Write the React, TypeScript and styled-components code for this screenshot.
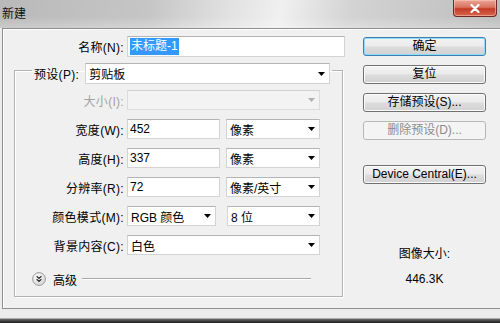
import styled, { createGlobalStyle } from "styled-components";

const GlobalStyle = createGlobalStyle`
  html, body {
    margin: 0;
    padding: 0;
  }
  body {
    width: 500px;
    height: 323px;
    overflow: hidden;
    background: #ececec;
    font-family: "Liberation Sans", "Noto Sans CJK SC", sans-serif;
    font-size: 12px;
    color: #000;
  }
`;

const Window = styled.div`
  width: 500px;
  height: 323px;
  display: flex;
  flex-direction: column;
  background: #ececec;
`;

const TitleBar = styled.div`
  height: 28px;
  flex: none;
  display: flex;
  align-items: flex-start;
  justify-content: space-between;
  background:
    linear-gradient(to bottom, rgba(255, 255, 255, 0) 60%, rgba(255, 255, 255, 0.25) 100%),
    linear-gradient(100deg, #b9b9b9 0%, #c6c6c6 30%, #e2e2e2 46%, #f0f0f0 56%, #d3d3d3 70%, #bdbdbd 100%);
`;

const Title = styled.span`
  padding: 5px 0 0 2px;
  font-family: "Noto Sans CJK SC", sans-serif;
  font-size: 12px;
  line-height: 16px;
  color: #111;
`;

const CloseButton = styled.div`
  width: 44px;
  height: 17px;
  margin-right: 3px;
  box-sizing: border-box;
  border: 1px solid #6e2a22;
  border-top: none;
  border-radius: 0 0 4px 4px;
  background: linear-gradient(to bottom, #e9a597 0%, #d9735f 45%, #c23b25 55%, #d8664d 100%);
  box-shadow: inset 0 0 0 1px rgba(255, 210, 200, 0.5);
  display: flex;
  align-items: center;
  justify-content: center;
`;

const Frame = styled.div`
  height: 281px;
  flex: none;
  margin-left: 2px;
  box-sizing: border-box;
  border: 1px solid #8f8f8f;
  border-right: none;
  box-shadow: inset 1px 1px 0 #fff;
  background: #f0f0f0;
  padding: 7px 0 0 11px;
  display: flex;
`;

const BottomEdge = styled.div`
  flex: 1;
  background: linear-gradient(to bottom, #ececec 0, #ececec 9px, #6a6a6a 10px, #1c1c1c 100%);
`;

const LeftCol = styled.div`
  width: 331px;
  display: flex;
  flex-direction: column;
`;

const RightCol = styled.div`
  width: 123px;
  margin-left: 18px;
  padding-top: 1px;
  display: flex;
  flex-direction: column;
`;

const NameRow = styled.div`
  display: grid;
  grid-template-columns: 110px 218px;
  column-gap: 3px;
  align-items: center;
  height: 21px;
`;

const Label = styled.span<{ $disabled?: boolean }>`
  text-align: right;
  white-space: nowrap;
  letter-spacing: 0.3px;
  color: ${(p) => (p.$disabled ? "#a3a3a3" : "#000")};
`;

const TextBox = styled.div<{ $w?: number }>`
  height: ${(p) => (p.$w ? 20 : 21)}px;
  width: ${(p) => (p.$w ? `${p.$w}px` : "auto")};
  box-sizing: border-box;
  border: 1px solid #d3d3d3;
  border-top-color: #b4b4b4;
  background: #fff;
  padding: 0 2px;
  display: flex;
  align-items: center;
  flex: none;
`;

const Selected = styled.span`
  background: #3399ff;
  color: #fff;
  padding: 0 1px;
  line-height: 17px;
`;

const Field = styled.div<{ $w: number; $h?: number; $disabled?: boolean }>`
  width: ${(p) => p.$w}px;
  height: ${(p) => p.$h ?? 20}px;
  flex: none;
  box-sizing: border-box;
  border: 1px solid ${(p) => (p.$disabled ? "#dcdcdc" : "#d3d3d3")};
  border-top-color: ${(p) => (p.$disabled ? "#d0d0d0" : "#b4b4b4")};
  background: ${(p) => (p.$disabled ? "#f3f3f3" : "#fff")};
  padding: 0 4px 0 3px;
  display: flex;
  align-items: center;
  justify-content: space-between;
  white-space: nowrap;
`;

const GroupBox = styled.fieldset`
  width: 329px;
  box-sizing: border-box;
  margin: 0;
  padding: 6px 0 12px 0;
  border: 1px solid #b3b3b3;
  box-shadow: 1px 1px 0 #fff, inset 1px 1px 0 #fff;
`;

const Legend = styled.legend`
  margin-left: 17px;
  padding: 6px 2px 0 2px;
`;

const LegendInner = styled.div`
  display: flex;
  align-items: center;
  gap: 6px;
`;

const FieldGrid = styled.div`
  display: grid;
  grid-template-columns: 109px auto;
  grid-auto-rows: 20px;
  column-gap: 3px;
  row-gap: 9px;
  align-items: center;
`;

const Controls = styled.div<{ $gap?: number }>`
  display: flex;
  gap: ${(p) => p.$gap ?? 6}px;
`;

const AdvancedRow = styled.div`
  grid-column: 1 / -1;
  height: 16px;
  margin-top: 10px;
  margin-left: 17px;
  display: flex;
  align-items: center;
`;

const AdvancedText = styled.span`
  margin-left: 7px;
`;

const Rule = styled.div`
  width: 229px;
  margin-left: 5px;
  border-top: 1px solid #a8a8a8;
  border-bottom: 1px solid #fff;
`;

const ButtonStack = styled.div`
  display: flex;
  flex-direction: column;
  gap: 9px;
`;

const Button = styled.button<{ $default?: boolean; $space?: number }>`
  width: 123px;
  height: 19px;
  margin-top: ${(p) => p.$space ?? 0}px;
  padding: 0;
  box-sizing: border-box;
  font-family: "Liberation Sans", "Noto Sans CJK SC", sans-serif;
  font-size: 12px;
  line-height: 17px;
  color: #000;
  border: 1px solid ${(p) => (p.$default ? "#3c7fb1" : "#707070")};
  border-radius: 3px;
  background: linear-gradient(to bottom, #f3f3f3 0%, #ebebeb 48%, #dddddd 52%, #d1d1d1 100%);
  box-shadow: inset 0 0 0 1px ${(p) => (p.$default ? "#8fdcf6" : "#fbfbfb")};

  &:disabled {
    color: #8c8c8c;
    border-color: #b5b8ba;
    background: #f4f4f4;
    box-shadow: none;
  }
`;

const ImageSize = styled.div`
  margin-top: 58px;
  text-align: center;
  line-height: 25px;
`;

const Arrow = ({ disabled }: { disabled?: boolean }) => (
  <svg width="7" height="4" viewBox="0 0 7 4">
    <path d="M0 0 H7 L3.5 4 Z" fill={disabled ? "#b0b0b0" : "#000"} />
  </svg>
);

const Select = ({ w, children, disabled, h }: { w: number; children?: React.ReactNode; disabled?: boolean; h?: number }) => (
  <Field $w={w} $h={h} $disabled={disabled}>
    <span>{children}</span>
    <Arrow disabled={disabled} />
  </Field>
);

const ExpandIcon = () => (
  <svg width="14" height="14" viewBox="0 0 14 14">
    <defs>
      <radialGradient id="eg" cx="0.4" cy="0.35" r="0.7">
        <stop offset="0" stopColor="#ffffff" />
        <stop offset="1" stopColor="#d4d4d4" />
      </radialGradient>
    </defs>
    <circle cx="7" cy="7" r="6.4" fill="url(#eg)" stroke="#9a9a9a" strokeWidth="1" />
    <path d="M4.6 4.3 L7 6.3 L9.4 4.3 M4.6 7.3 L7 9.3 L9.4 7.3" fill="none" stroke="#333" strokeWidth="1.3" />
  </svg>
);

export default function App() {
  return (
    <>
      <GlobalStyle />
      <Window>
        <TitleBar>
          <Title>新建</Title>
          <CloseButton>
            <svg width="10" height="9" viewBox="0 0 10 9">
              <path d="M1.5 1 L8.5 8 M8.5 1 L1.5 8" stroke="#fff" strokeWidth="2.2" strokeLinecap="round" />
            </svg>
          </CloseButton>
        </TitleBar>
        <Frame>
          <LeftCol>
            <NameRow>
              <Label>名称(N):</Label>
              <TextBox>
                <Selected>未标题-1</Selected>
              </TextBox>
            </NameRow>
            <GroupBox>
              <Legend>
                <LegendInner>
                  <Label>预设(P):</Label>
                  <Select w={245} h={21}>剪贴板</Select>
                </LegendInner>
              </Legend>
              <FieldGrid>
                <Label $disabled>大小(I):</Label>
                <Controls>
                  <Select w={193} disabled />
                </Controls>

                <Label>宽度(W):</Label>
                <Controls>
                  <TextBox $w={93}>452</TextBox>
                  <Select w={94}>像素</Select>
                </Controls>

                <Label>高度(H):</Label>
                <Controls>
                  <TextBox $w={93}>337</TextBox>
                  <Select w={94}>像素</Select>
                </Controls>

                <Label>分辨率(R):</Label>
                <Controls>
                  <TextBox $w={93}>72</TextBox>
                  <Select w={94}>像素/英寸</Select>
                </Controls>

                <Label>颜色模式(M):</Label>
                <Controls $gap={11}>
                  <Select w={89}>RGB 颜色</Select>
                  <Select w={93}>8 位</Select>
                </Controls>

                <Label>背景内容(C):</Label>
                <Controls>
                  <Select w={193}>白色</Select>
                </Controls>

                <AdvancedRow>
                  <ExpandIcon />
                  <AdvancedText>高级</AdvancedText>
                  <Rule />
                </AdvancedRow>
              </FieldGrid>
            </GroupBox>
          </LeftCol>
          <RightCol>
            <ButtonStack>
              <Button $default>确定</Button>
              <Button>复位</Button>
              <Button>存储预设(S)...</Button>
              <Button disabled>删除预设(D)...</Button>
              <Button $space={16}>Device Central(E)...</Button>
            </ButtonStack>
            <ImageSize>
              <div>图像大小:</div>
              <div>446.3K</div>
            </ImageSize>
          </RightCol>
        </Frame>
        <BottomEdge />
      </Window>
    </>
  );
}
